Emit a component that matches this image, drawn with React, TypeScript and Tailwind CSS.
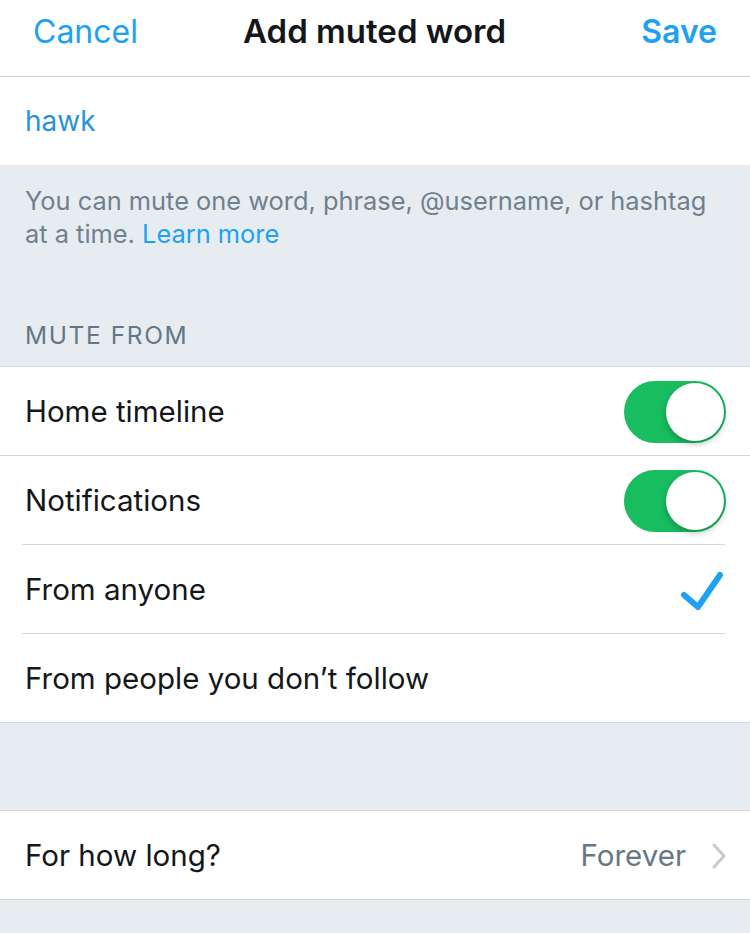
import React from 'react';

const Toggle: React.FC = () => (
    <div className="relative w-[102px] h-[62px] rounded-full bg-[#18bd5f] flex-shrink-0">
        <div className="absolute right-[2px] top-[2px] w-[58px] h-[58px] rounded-full bg-white shadow-[0_3px_6px_rgba(0,0,0,0.25)]" />
    </div>
);

const Row: React.FC<{ label: string; right?: React.ReactNode; border?: 'full' | 'inset' | 'none' }> = ({ label, right, border = 'full' }) => (
    <div className="relative h-[89px] bg-white flex items-center justify-between pl-[25px] pr-[24px]">
        <span className="text-[29.5px] text-[#14171a] leading-none">{label}</span>
        {right}
        {border === 'full' && <div className="absolute left-0 right-0 bottom-0 h-px bg-[#d4d9de]" />}
        {border === 'inset' && <div className="absolute left-[22px] right-[25px] bottom-0 h-px bg-[#d4d9de]" />}
    </div>
);

export default function App() {
    return (
        <div className="w-[750px] h-[933px] overflow-hidden bg-[#e6ecf0]" style={{ fontFamily: 'Inter, "Noto Sans", sans-serif' }}>
            {/* Nav bar */}
            <div className="h-[77px] bg-white border-b border-[#c8cdd2] flex items-center justify-between pl-[33px] pr-[33px] pb-[12px]">
                <span className="text-[32px] text-[#1da1f2]">Cancel</span>
                <span className="text-[33px] font-semibold text-[#14171a] mr-[30px]">Add muted word</span>
                <span className="text-[32px] font-semibold text-[#1da1f2]">Save</span>
            </div>

            {/* Input */}
            <div className="h-[88px] bg-white flex items-center pl-[25px]">
                <span className="text-[28px] text-[#2a92d6]">hawk</span>
            </div>

            {/* Help */}
            <div className="h-[201px] pt-[19px] px-[25px] flex flex-col">
                <div className="text-[25.4px] leading-[33px] text-[#71808e] whitespace-nowrap">
                    <div>You can mute one word, phrase, @username, or hashtag</div>
                    <div>
                        at a time. <span className="text-[#1da1f2]">Learn more</span>
                    </div>
                </div>
                <div className="mt-auto pb-[12px] text-[24.5px] tracking-[1.6px] text-[#657786]">MUTE FROM</div>
            </div>

            {/* Mute from */}
            <div className="border-t border-[#d4d9de]">
                <Row label="Home timeline" right={<Toggle />} />
                <Row label="Notifications" right={<Toggle />} border="inset" />
                <Row
                    label="From anyone"
                    border="inset"
                    right={
                        <svg width="44" height="40" viewBox="0 0 44 40" className="mr-[2px] mt-[2px]">
                            <path d="M4 24 L18 36 L40 4" fill="none" stroke="#1da1f2" strokeWidth="6" strokeLinecap="round" strokeLinejoin="round" />
                        </svg>
                    }
                />
                <Row label="From people you don’t follow" />
            </div>

            <div className="h-[88px] border-b border-[#d4d9de]" />

            <Row
                label="For how long?"
                right={
                    <div className="flex items-center gap-[26px]">
                        <span className="text-[29.5px] text-[#657786] leading-none">Forever</span>
                        <svg width="14" height="26" viewBox="0 0 14 26">
                            <path d="M2 2 L12 13 L2 24" fill="none" stroke="#c5cbd1" strokeWidth="3" strokeLinecap="round" strokeLinejoin="round" />
                        </svg>
                    </div>
                }
            />
        </div>
    );
}
